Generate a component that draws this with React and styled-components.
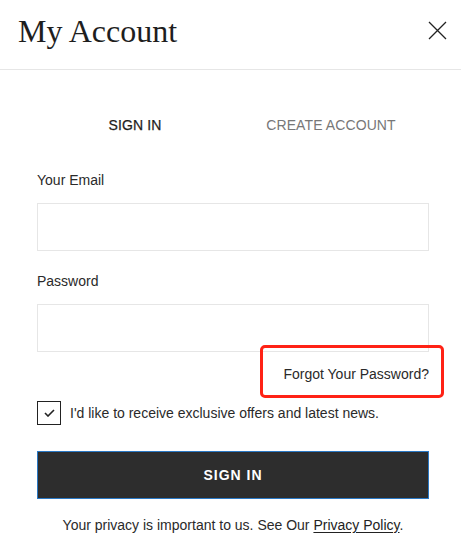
import React from 'react';
import styled, { createGlobalStyle } from 'styled-components';

const GlobalStyle = createGlobalStyle`
  html, body {
    margin: 0;
    padding: 0;
    background: #fff;
  }

  body {
    font-family: "Liberation Sans", Arial, sans-serif;
    color: #222;
  }
`;

const Modal = styled.div`
  position: relative;
  width: 461px;
  min-height: 548px;
  background: #fff;
`;

const Header = styled.header`
  display: flex;
  align-items: center;
  justify-content: space-between;
  padding: 0 14px 0 18px;
  border-bottom: 1px solid #e6e6e6;
  box-sizing: border-box;
  height: 70px;
`;

const Title = styled.h1`
  margin: 0 0 6px;
  font-family: "Liberation Serif", "Times New Roman", serif;
  font-weight: 400;
  font-size: 32px;
  letter-spacing: 0;
  color: #1e1e1e;
`;

const CloseButton = styled.button`
  width: 20px;
  height: 20px;
  padding: 0;
  margin-bottom: 8px;
  border: 0;
  background: none;
  display: flex;
  align-items: center;
  justify-content: center;
  cursor: pointer;
`;

const Body = styled.div`
  width: 392px;
  margin-left: 37px;
`;

const Tabs = styled.div`
  display: grid;
  grid-template-columns: 1fr 1fr;
  height: 56px;
  margin-top: 27px;
  align-items: center;
`;

const Tab = styled.button`
  border: 0;
  background: none;
  padding: 0;
  font-family: inherit;
  font-size: 14px;
  letter-spacing: 0.1px;
  text-align: center;
  color: ${({ $active }) => ($active ? '#1e1e1e' : '#777')};
  -webkit-text-stroke: ${({ $active }) => ($active ? '0.25px #1e1e1e' : '0')};
  cursor: pointer;
`;

const Form = styled.form`
  display: flex;
  flex-direction: column;
  margin-top: 19px;
`;

const Label = styled.label`
  font-size: 14px;
  line-height: 16px;
  color: #2a2a2a;
  margin-bottom: 15px;
`;

const Input = styled.input`
  height: 48px;
  box-sizing: border-box;
  border: 1px solid #e6e6e6;
  background: #fff;
  padding: 0 12px;
  font-family: inherit;
  font-size: 14px;
  outline: none;
  margin-bottom: ${({ $gap }) => $gap}px;
`;

const ForgotRow = styled.div`
  display: flex;
  justify-content: flex-end;
  height: 16px;
  margin-top: 14px;
`;

const ForgotLink = styled.a`
  font-size: 14px;
  line-height: 16px;
  color: #2a2a2a;
  text-decoration: none;
  cursor: pointer;
`;

const Annotation = styled.div`
  position: absolute;
  left: 260px;
  top: 345px;
  width: 184px;
  height: 53px;
  box-sizing: border-box;
  border: 3px solid #ff2215;
  border-radius: 5px;
  pointer-events: none;
`;

const CheckRow = styled.label`
  display: flex;
  align-items: center;
  gap: 9px;
  margin-top: 19px;
  font-size: 14px;
  color: #2a2a2a;
  cursor: pointer;
`;

const CheckBox = styled.span`
  width: 24px;
  height: 24px;
  box-sizing: border-box;
  border: 1px solid #222;
  display: flex;
  align-items: center;
  justify-content: center;
  flex: none;
`;

const SubmitButton = styled.button`
  height: 48px;
  margin-top: 26px;
  box-sizing: border-box;
  border: 1px solid #2a78c4;
  background: #2d2d2d;
  color: #fff;
  font-family: inherit;
  font-size: 14px;
  font-weight: 700;
  letter-spacing: 1px;
  cursor: pointer;
`;

const Privacy = styled.p`
  margin: 18px 0 0;
  text-align: center;
  font-size: 14px;
  line-height: 16px;
  color: #2a2a2a;

  a {
    color: #222;
    text-decoration: underline;
    text-underline-offset: 2px;
  }
`;

const CloseIcon = () => (
  <svg width="19" height="19" viewBox="0 0 19 19" fill="none">
    <path d="M1 1L18 18M18 1L1 18" stroke="#222" strokeWidth="1.3" />
  </svg>
);

const CheckIcon = () => (
  <svg width="11" height="8" viewBox="0 0 11 8" fill="none">
    <path d="M1 4L4 7L10 1" stroke="#222" strokeWidth="1.6" />
  </svg>
);

export default function App() {
  return (
    <>
      <GlobalStyle />
      <Modal>
        <Header>
          <Title>My Account</Title>
          <CloseButton aria-label="Close">
            <CloseIcon />
          </CloseButton>
        </Header>
        <Body>
          <Tabs>
            <Tab $active>SIGN IN</Tab>
            <Tab>CREATE ACCOUNT</Tab>
          </Tabs>
          <Form onSubmit={(e) => e.preventDefault()}>
            <Label htmlFor="email">Your Email</Label>
            <Input id="email" type="email" $gap={22} />
            <Label htmlFor="password">Password</Label>
            <Input id="password" type="password" $gap={0} />
            <ForgotRow>
              <ForgotLink>Forgot Your Password?</ForgotLink>
            </ForgotRow>
            <CheckRow>
              <CheckBox>
                <CheckIcon />
              </CheckBox>
              I'd like to receive exclusive offers and latest news.
            </CheckRow>
            <SubmitButton type="submit">SIGN IN</SubmitButton>
            <Privacy>
              Your privacy is important to us. See Our <a>Privacy Policy</a>.
            </Privacy>
          </Form>
        </Body>
        <Annotation />
      </Modal>
    </>
  );
}
